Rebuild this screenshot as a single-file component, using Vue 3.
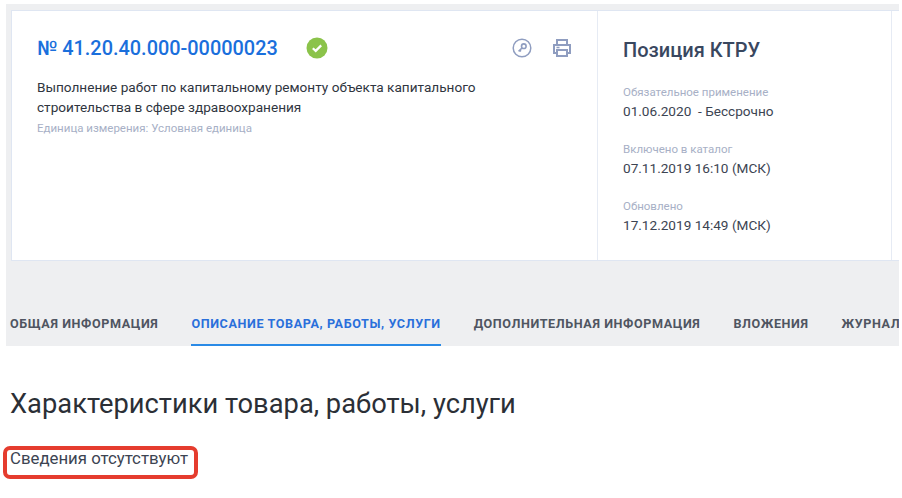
<template>
  <div class="page">
    <div class="top">
      <div class="card">
        <div class="main">
          <div class="head">
            <a class="number">№ 41.20.40.000-00000023</a>
            <svg class="ok" width="22" height="22" viewBox="0 0 22 22">
              <circle cx="11" cy="11" r="10.5" fill="#8bc34a" />
              <path d="M6.8 11.2l2.9 2.7L15.2 8.4" fill="none" stroke="#fff" stroke-width="2.2" />
            </svg>
            <div class="tools">
              <svg width="20" height="20" viewBox="0 0 20 20" fill="none" stroke="#8f9dc0">
                <circle cx="10" cy="10" r="8.8" stroke-width="1.5" />
                <circle cx="11.8" cy="8.2" r="2.3" stroke-width="1.6" />
                <path d="M10.2 9.8L6.6 13.4M7.8 12.2l1.2 1.2" stroke-width="1.6" />
              </svg>
              <svg width="20" height="20" viewBox="0 0 20 20" fill="none" stroke="#8f9dc0" stroke-width="2">
                <path d="M5 7V2h10v5" />
                <path d="M5 15H2V7h16v8h-3" />
                <path d="M5 12h10v6H5z" />
                <path d="M4.5 9.5h3" stroke-width="1.5" />
              </svg>
            </div>
          </div>
          <p class="desc">Выполнение работ по капитальному ремонту объекта капитального строительства в сфере здравоохранения</p>
          <p class="unit">Единица измерения: Условная единица</p>
        </div>
        <div class="side">
          <h2>Позиция КТРУ</h2>
          <div v-for="item in dates" :key="item.label" class="date">
            <div class="label">{{ item.label }}</div>
            <div class="value">{{ item.value }}</div>
          </div>
        </div>
        <div class="rest"></div>
      </div>
      <nav class="tabs">
        <a
          v-for="tab in tabs"
          :key="tab"
          class="tab"
          :class="{ active: tab === activeTab }"
        >{{ tab }}</a>
      </nav>
    </div>
    <h1>Характеристики товара, работы, услуги</h1>
    <div class="none">Сведения отсутствуют</div>
  </div>
</template>

<script setup>
const activeTab = 'ОПИСАНИЕ ТОВАРА, РАБОТЫ, УСЛУГИ'

const tabs = [
  'ОБЩАЯ ИНФОРМАЦИЯ',
  'ОПИСАНИЕ ТОВАРА, РАБОТЫ, УСЛУГИ',
  'ДОПОЛНИТЕЛЬНАЯ ИНФОРМАЦИЯ',
  'ВЛОЖЕНИЯ',
  'ЖУРНАЛ'
]

const dates = [
  { label: 'Обязательное применение', value: '01.06.2020 \u00a0- Бессрочно' },
  { label: 'Включено в каталог', value: '07.11.2019 16:10 (МСК)' },
  { label: 'Обновлено', value: '17.12.2019 14:49 (МСК)' }
]
</script>

<style>
html,
body {
  background: #fff;
  overflow: hidden;
}
</style>

<style scoped>
.page {
  width: 902px;
  height: 498px;
  overflow: hidden;
  font-family: Roboto, "Liberation Sans", sans-serif;
  padding-top: 4px;
  box-sizing: border-box;
}

.top {
  margin-left: 6px;
  width: 893px;
  height: 342px;
  background: #eeeff1;
  padding: 6px 0 0 5px;
  box-sizing: border-box;
  overflow: hidden;
}

.card {
  display: flex;
  height: 251px;
  width: 888px;
  background: #fff;
  border: 1px solid #dfe6f2;
  border-right: 0;
  box-sizing: border-box;
}

.main {
  width: 586px;
  padding: 25px 25px 0 25px;
  box-sizing: border-box;
  border-right: 1px solid #e6ebf4;
}

.head {
  display: flex;
  align-items: center;
  height: 24px;
}

.number {
  font-size: 19.9px;
  font-weight: 500;
  color: #1a6fdc;
}

.ok {
  margin-left: 28px;
}

.tools {
  margin-left: auto;
  display: flex;
  gap: 20px;
}

.desc {
  margin: 17px 0 0;
  width: 470px;
  font-size: 13.6px;
  line-height: 20px;
  color: #2f3540;
}

.unit {
  margin: 4px 0 0;
  font-size: 11.5px;
  line-height: 15px;
  color: #a7b0c6;
}

.side {
  width: 294px;
  padding: 26px 0 0 25px;
  box-sizing: border-box;
  border-right: 1px solid #e6ebf4;
}

.side h2 {
  margin: 0 0 22px;
  font-size: 20px;
  line-height: 26px;
  font-weight: 500;
  color: #39475f;
}

.date {
  margin-bottom: 22px;
}

.label {
  font-size: 11.5px;
  line-height: 15px;
  color: #a7b0c6;
}

.value {
  margin-top: 2px;
  font-size: 13.6px;
  line-height: 18px;
  color: #3c4452;
}

.rest {
  flex: 1;
}

.tabs {
  display: flex;
  gap: 33px;
  margin: 55px 0 0 -1px;
  white-space: nowrap;
}

.tab {
  font-size: 12.6px;
  font-weight: 700;
  letter-spacing: 0.6px;
  line-height: 16px;
  padding-bottom: 12px;
  color: #4f5561;
}

.tab.active {
  color: #2a6fdb;
  border-bottom: 2px solid #2a8ae6;
}

h1 {
  margin: 41px 0 0 10px;
  font-size: 27.3px;
  font-weight: 400;
  line-height: 34px;
  color: #2b2f36;
}

.none {
  margin: 25px 0 0 3px;
  width: 195px;
  height: 33px;
  border: 4px solid #e53c2e;
  border-radius: 7px;
  box-sizing: border-box;
  padding: 0 0 0 3px;
  font-size: 16.8px;
  line-height: 16px;
  color: #3c4452;
}
</style>
